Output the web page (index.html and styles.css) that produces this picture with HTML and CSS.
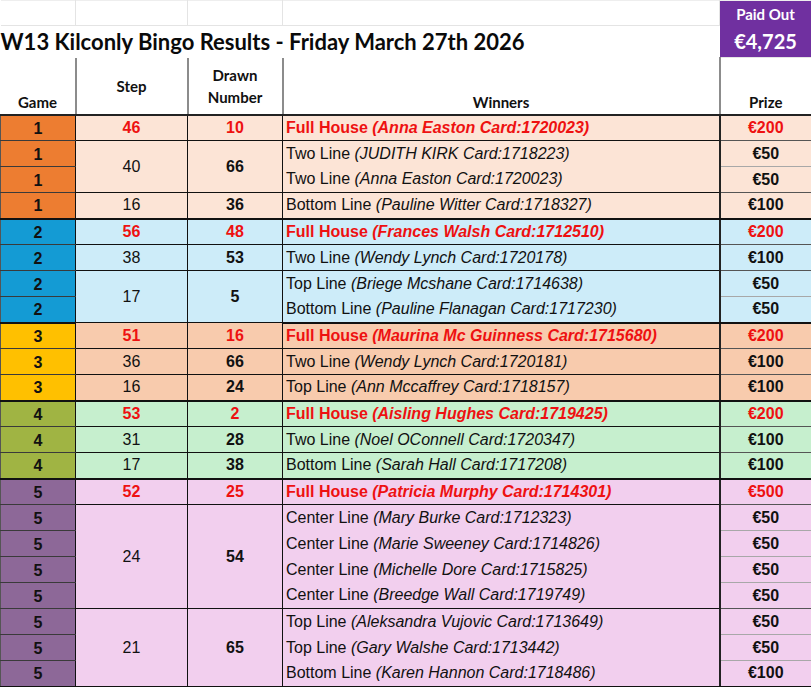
FILE: index.html
```html
<!DOCTYPE html>
<html>
<head>
<meta charset="utf-8">
<link rel="stylesheet" href="styles.css">
</head>
<body>
<table class="sheet">
<colgroup>
<col class="c-game"><col class="c-step"><col class="c-drawn"><col class="c-win"><col class="c-prize">
</colgroup>
<tr class="blank"><td class="edge"></td><td></td><td></td><td></td>
<td class="paid" rowspan="2"><div class="paid-label">Paid Out</div><div class="paid-amt">€4,725</div></td></tr>
<tr class="titlerow"><td class="title edge" colspan="4">W13 Kilconly Bingo Results - Friday March 27th 2026</td></tr>
<tr class="head">
<th class="h-bottom edge">Game</th><th class="h-mid">Step</th><th class="h-mid">Drawn<br>Number</th><th class="h-bottom">Winners</th><th class="h-bottom h-last">Prize</th>
</tr>

<tr class="g1"><td class="gm">1</td><td class="fh">46</td><td class="fh">10</td><td class="win fh">Full House <i>(Anna Easton Card:1720023)</i></td><td class="pz fh">€200</td></tr>
<tr class="g1"><td class="gm">1</td><td class="st" rowspan="2">40</td><td class="dn" rowspan="2">66</td><td class="win mid">Two Line <i>(JUDITH KIRK Card:1718223)</i></td><td class="pz pmid">€50</td></tr>
<tr class="g1"><td class="gm">1</td><td class="win">Two Line <i>(Anna Easton Card:1720023)</i></td><td class="pz">€50</td></tr>
<tr class="g1 gend"><td class="gm">1</td><td class="st">16</td><td class="dn">36</td><td class="win">Bottom Line <i>(Pauline Witter Card:1718327)</i></td><td class="pz">€100</td></tr>

<tr class="g2"><td class="gm">2</td><td class="fh">56</td><td class="fh">48</td><td class="win fh">Full House <i>(Frances Walsh Card:1712510)</i></td><td class="pz fh">€200</td></tr>
<tr class="g2"><td class="gm">2</td><td class="st">38</td><td class="dn">53</td><td class="win">Two Line <i>(Wendy Lynch Card:1720178)</i></td><td class="pz">€100</td></tr>
<tr class="g2"><td class="gm">2</td><td class="st" rowspan="2">17</td><td class="dn" rowspan="2">5</td><td class="win mid">Top Line <i>(Briege Mcshane Card:1714638)</i></td><td class="pz pmid">€50</td></tr>
<tr class="g2 gend"><td class="gm">2</td><td class="win">Bottom Line <i>(Pauline Flanagan Card:1717230)</i></td><td class="pz">€50</td></tr>

<tr class="g3"><td class="gm">3</td><td class="fh">51</td><td class="fh">16</td><td class="win fh">Full House <i>(Maurina Mc Guinness Card:1715680)</i></td><td class="pz fh">€200</td></tr>
<tr class="g3"><td class="gm">3</td><td class="st">36</td><td class="dn">66</td><td class="win">Two Line <i>(Wendy Lynch Card:1720181)</i></td><td class="pz">€100</td></tr>
<tr class="g3 gend"><td class="gm">3</td><td class="st">16</td><td class="dn">24</td><td class="win">Top Line <i>(Ann Mccaffrey Card:1718157)</i></td><td class="pz">€100</td></tr>

<tr class="g4"><td class="gm">4</td><td class="fh">53</td><td class="fh">2</td><td class="win fh">Full House <i>(Aisling Hughes Card:1719425)</i></td><td class="pz fh">€200</td></tr>
<tr class="g4"><td class="gm">4</td><td class="st">31</td><td class="dn">28</td><td class="win">Two Line <i>(Noel OConnell Card:1720347)</i></td><td class="pz">€100</td></tr>
<tr class="g4 gend"><td class="gm">4</td><td class="st">17</td><td class="dn">38</td><td class="win">Bottom Line <i>(Sarah Hall Card:1717208)</i></td><td class="pz">€100</td></tr>

<tr class="g5"><td class="gm">5</td><td class="fh">52</td><td class="fh">25</td><td class="win fh">Full House <i>(Patricia Murphy Card:1714301)</i></td><td class="pz fh">€500</td></tr>
<tr class="g5"><td class="gm">5</td><td class="st" rowspan="4">24</td><td class="dn" rowspan="4">54</td><td class="win mid">Center Line <i>(Mary Burke Card:1712323)</i></td><td class="pz pmid">€50</td></tr>
<tr class="g5"><td class="gm">5</td><td class="win mid">Center Line <i>(Marie Sweeney Card:1714826)</i></td><td class="pz pmid">€50</td></tr>
<tr class="g5"><td class="gm">5</td><td class="win mid">Center Line <i>(Michelle Dore Card:1715825)</i></td><td class="pz pmid">€50</td></tr>
<tr class="g5"><td class="gm">5</td><td class="win">Center Line <i>(Breedge Wall Card:1719749)</i></td><td class="pz">€50</td></tr>
<tr class="g5"><td class="gm">5</td><td class="st" rowspan="3">21</td><td class="dn" rowspan="3">65</td><td class="win mid">Top Line <i>(Aleksandra Vujovic Card:1713649)</i></td><td class="pz pmid">€50</td></tr>
<tr class="g5"><td class="gm">5</td><td class="win mid">Top Line <i>(Gary Walshe Card:1713442)</i></td><td class="pz pmid">€50</td></tr>
<tr class="g5 gend"><td class="gm">5</td><td class="win">Bottom Line <i>(Karen Hannon Card:1718486)</i></td><td class="pz">€100</td></tr>
</table>
</body>
</html>
```

FILE: styles.css
```css
* { box-sizing: border-box; }
body { margin: 0; background: #fff; }

.sheet {
  width: 811px;
  border-collapse: collapse;
  table-layout: fixed;
  font-family: "Liberation Sans", Arial, sans-serif;
  font-size: 16px;
  color: #111;
}
.c-game { width: 75px; }
.c-step { width: 112px; }
.c-drawn { width: 95px; }
.c-win { width: 437px; }
.c-prize { width: 92px; }

.sheet td, .sheet th { padding: 0; border: 0; }

.blank { height: 25px; }
.blank td {
  border-right: 1px solid #e4e4e4;
  border-bottom: 1px solid #e4e4e4;
  border-top: 1px solid #eeeeee;
}
.edge { border-left: 1px solid #9a9a9a; }

.titlerow { height: 32px; }
.title {
  font-family: Lato, "Open Sans", sans-serif;
  font-weight: 700;
  font-size: 22px;
  color: #0a0a0a;
  padding-left: 6px;
  padding-top: 1px;
  white-space: nowrap;
  border-bottom: 1px solid #222;
}

.paid {
  background: #7030a0;
  color: #fff;
  text-align: center;
  border: 1px solid #222;
  font-family: Lato, "Open Sans", sans-serif;
  font-weight: 700;
  vertical-align: top;
}
.paid-label { font-size: 15px; line-height: 18px; padding-top: 4px; }
.paid-amt { font-size: 20px; line-height: 24px; padding-top: 6px; }

.head { height: 57px; }
.head th {
  font-family: Lato, "Open Sans", sans-serif;
  font-weight: 700;
  font-size: 15px;
  line-height: 22px;
  text-align: center;
  border-right: 2px solid #8c8c8c;
  border-bottom: 2px solid #222;
}
.head th.h-bottom { vertical-align: bottom; padding-bottom: 1px; }
.head th.h-mid { vertical-align: middle; padding-bottom: 0; }
.head th.h-last { border-right: 1px solid #555; }

.sheet tr.g1, .sheet tr.g2, .sheet tr.g3, .sheet tr.g4, .sheet tr.g5 { height: 26px; }

.g1 td, .g2 td, .g3 td, .g4 td, .g5 td {
  text-align: center;
  vertical-align: middle;
  line-height: 18px;
  border-right: 1px solid #111;
  border-bottom: 1px solid #111;
  white-space: nowrap;
}

.g1 td { background: #fce4d6; }
.g2 td { background: #cdecf9; }
.g3 td { background: #f8cbad; }
.g4 td { background: #c6efce; }
.g5 td { background: #f2cfee; }

.g1 td.gm { background: #ed7d31; }
.g2 td.gm { background: #149bd4; }
.g3 td.gm { background: #ffc000; }
.g4 td.gm { background: #a0b443; }
.g5 td.gm { background: #8d6898; }

td.gm {
  font-weight: 700;
  border-left: 1px solid #555;
  padding-top: 2px;
}
.g1 td.gm, .g2 td.gm, .g3 td.gm, .g4 td.gm, .g5 td.gm { border-bottom-color: #3a3a3a; }

td.dn { font-weight: 700; }
td.fh { color: #ee1111; font-weight: 700; }
.g1 td.pz, .g2 td.pz, .g3 td.pz, .g4 td.pz, .g5 td.pz { font-weight: 700; border-bottom-color: #555; }
.g1 td.pmid, .g2 td.pmid, .g3 td.pmid, .g4 td.pmid, .g5 td.pmid { border-bottom-color: #a8a8a8; }
td.pz.fh { color: #ee1111; }

td.win { text-align: left; padding-left: 3px; }
.g1 td.win, .g2 td.win, .g3 td.win, .g4 td.win, .g5 td.win { border-right: 2px solid #222; text-align: left; }
.g1 td.mid, .g2 td.mid, .g3 td.mid, .g4 td.mid, .g5 td.mid { border-bottom: none; }
td.win i { font-style: italic; }

.sheet tr.gend td { border-bottom: 2px solid #111; }
```
